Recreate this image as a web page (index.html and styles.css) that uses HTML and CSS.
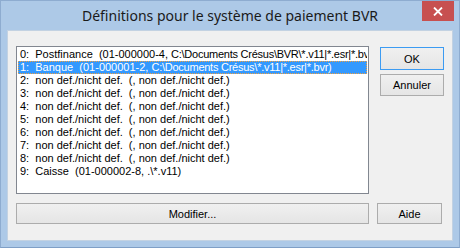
FILE: index.html
```html
<!DOCTYPE html>
<html lang="fr">

<head>
    <meta charset="UTF-8">
    <title>Définitions pour le système de paiement BVR</title>
    <link rel="stylesheet" href="styles.css">
</head>

<body>
    <div class="window">
        <div class="titlebar">
            <span class="title">Définitions pour le système de paiement BVR</span>
            <button class="close-btn" aria-label="Fermer">
                <svg width="10" height="9" viewBox="0 0 10 9">
                    <path d="M1 0.5 L9 8.5 M9 0.5 L1 8.5" stroke="#fff" stroke-width="1.8" fill="none"/>
                </svg>
            </button>
        </div>

        <div class="client">
            <div class="top-row">
                <ul class="listbox">
                    <li>0:  Postfinance  (01-000000-4, <span class="path">C:\Documents Crésus\BVR\*.v11|*.esr|*.bvr)</span></li>
                    <li class="selected">1:  Banque  (01-000001-2, <span class="path">C:\Documents Crésus\*.v11|*.esr|*.bvr)</span></li>
                    <li>2:  non def./nicht def.  (, non def./nicht def.)</li>
                    <li>3:  non def./nicht def.  (, non def./nicht def.)</li>
                    <li>4:  non def./nicht def.  (, non def./nicht def.)</li>
                    <li>5:  non def./nicht def.  (, non def./nicht def.)</li>
                    <li>6:  non def./nicht def.  (, non def./nicht def.)</li>
                    <li>7:  non def./nicht def.  (, non def./nicht def.)</li>
                    <li>8:  non def./nicht def.  (, non def./nicht def.)</li>
                    <li>9:  Caisse  (01-000002-8, .\*.v11)</li>
                </ul>
                <div class="side-buttons">
                    <button class="btn btn-default">OK</button>
                    <button class="btn btn-cancel">Annuler</button>
                </div>
            </div>
            <div class="bottom-row">
                <button class="btn btn-modify">Modifier...</button>
                <button class="btn btn-help">Aide</button>
            </div>
        </div>
    </div>
</body>

</html>
```

FILE: styles.css
```css
body {
    margin: 0;
    padding: 0;
    background-color: #ffffff;
    font-family: "Liberation Sans", Arial, sans-serif;
}

.window {
    position: relative;
    width: 460px;
    height: 248px;
    background-color: #adc9e7;
    border: 1px solid #8eacd0;
    border-bottom-color: #7f9fc6;
    padding: 0 6px 0 6px;
    box-sizing: border-box;
    display: flex;
    flex-direction: column;
}

/* Title bar */
.titlebar {
    height: 29px;
    display: flex;
    align-items: center;
    justify-content: center;
}

.title {
    font-family: "Noto Sans", "Open Sans", sans-serif;
    font-size: 14px;
    color: #1a1a1a;
    margin-top: -1px;
}

.close-btn {
    position: absolute;
    top: 0;
    right: 5px;
    width: 32px;
    height: 20px;
    padding: 0;
    border: none;
    background-color: #c75050;
    display: flex;
    align-items: center;
    justify-content: center;
}

/* Client area */
.client {
    background-color: #f0f0f0;
    border: 1px solid #c3d2e2;
    height: 211px;
    box-sizing: border-box;
    font-size: 11px;
    color: #000;
}

.top-row {
    display: flex;
    padding-left: 8px;
    margin-top: 15px;
}

.listbox {
    list-style: none;
    margin: 0;
    padding: 1px;
    width: 353px;
    height: 148px;
    box-sizing: border-box;
    background-color: #ffffff;
    border: 1px solid #828790;
    overflow: hidden;
}

.listbox li {
    height: 13px;
    line-height: 13px;
    padding-left: 2px;
    white-space: pre;
    overflow: hidden;
}

.listbox .path {
    letter-spacing: -0.25px;
}

.listbox li.selected {
    background-color: #3399ff;
    color: #ffffff;
    outline: 1px dotted #f0a040;
    outline-offset: -1px;
}

.side-buttons {
    display: flex;
    flex-direction: column;
    gap: 4px;
    margin-left: 11px;
    margin-top: 1px;
}

.btn {
    font-family: "Liberation Sans", Arial, sans-serif;
    font-size: 11px;
    color: #000;
    background: linear-gradient(#f0f0f0, #e5e5e5);
    border: 1px solid #acacac;
    padding: 0;
    height: 22px;
    box-sizing: border-box;
}

.btn-default {
    width: 64px;
    height: 23px;
    border-color: #3c9bf2;
}

.btn-cancel {
    width: 64px;
}

.bottom-row {
    display: flex;
    gap: 8px;
    padding-left: 8px;
    margin-top: 9px;
}

.btn-modify {
    width: 353px;
    height: 21px;
}

.btn-help {
    width: 65px;
    height: 21px;
}
```
